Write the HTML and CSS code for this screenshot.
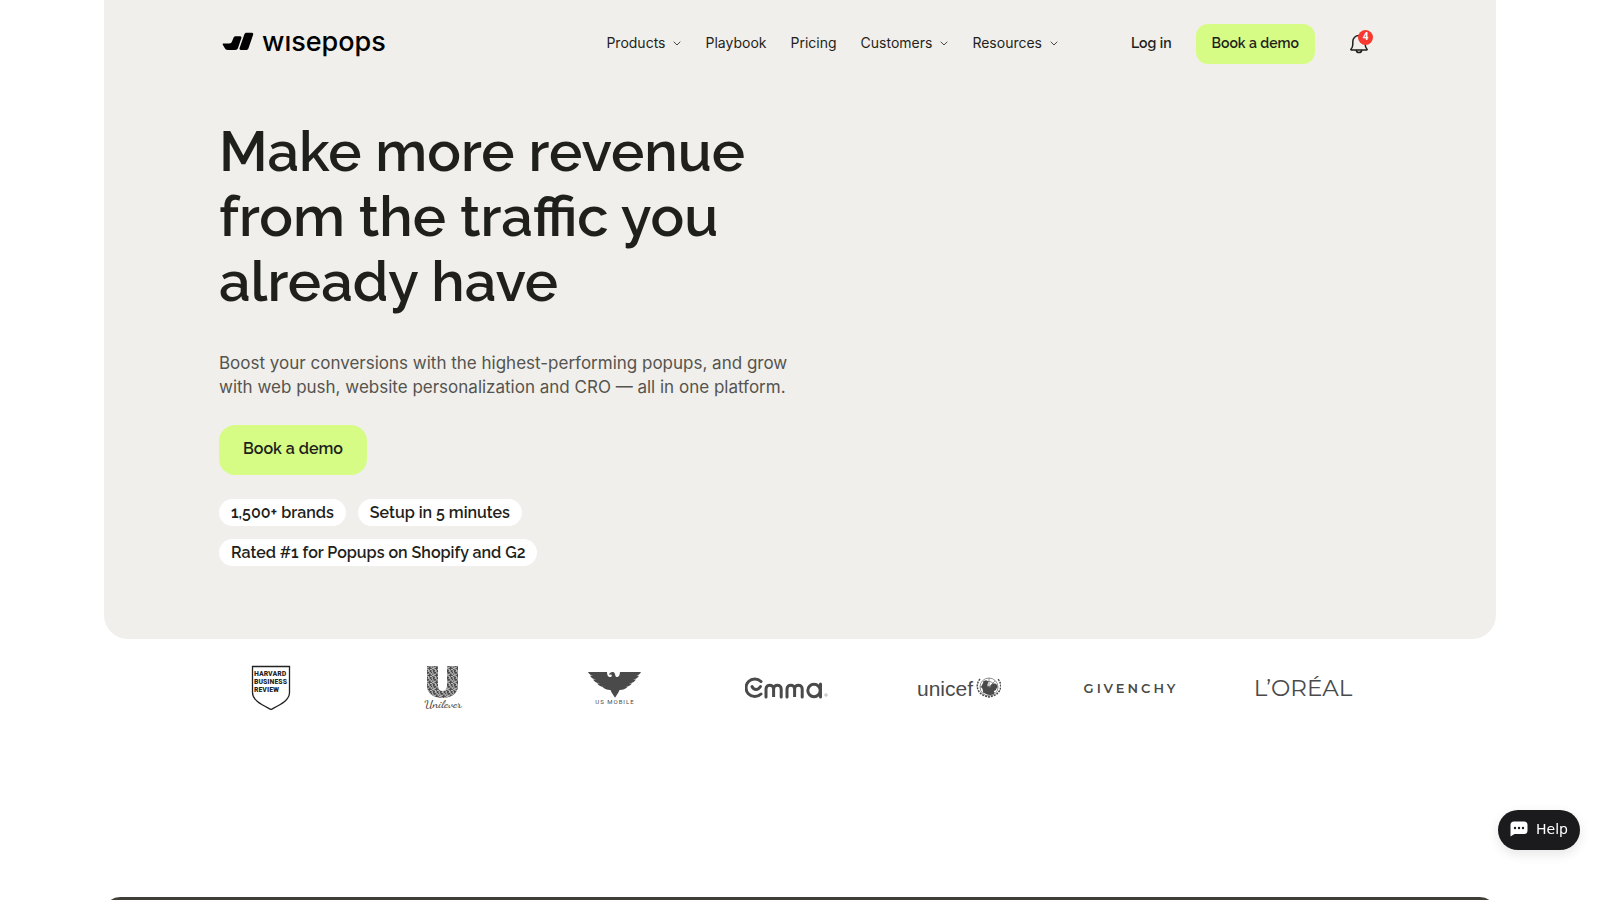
FILE: index.html
```html
<!DOCTYPE html>
<html lang="en">
<head>
  <meta charset="UTF-8">
  <meta name="viewport" content="width=device-width, initial-scale=1">
  <title>Wisepops</title>
  <link rel="stylesheet" href="styles.css">
</head>

<body>

  <div class="hero">
    <header class="header">
      <a class="logo" href="#" aria-label="wisepops">
        <svg class="logo-mark" width="32" height="20" viewBox="0 0 32 20">
          <path d="M1.500 11.500h5.500c2 0 2.500-.8 3.200-2.500l1.200-3c.5-1.200 1.100-1.700 2.400-1.700h4.400c1 0 1.500.7 1.200 1.700l-3.300 9.800c-.5 1.500-1.400 2.200-3 2.200H6.200c-2 0-3-.8-3.800-2.500L.8 12.700c-.3-.7 0-1.200.7-1.200z"/>
          <path d="M22.300 2.500C22.700 1.400 23.400.8 24.600.8h5.200c1.200 0 1.700.8 1.300 1.900l-4.600 13.500c-.4 1.200-1.200 1.800-2.400 1.800h-5.200c-1.200 0-1.700-.8-1.300-1.900z"/>
        </svg>
        <span class="logo-text">wısepops</span>
      </a>

      <nav class="nav">
        <a href="#">Products <svg class="chevron" width="8" height="5" viewBox="0 0 8 5"><path d="M.7.7 4 4 7.300.7"/></svg></a>
        <a href="#">Playbook</a>
        <a href="#">Pricing</a>
        <a href="#">Customers <svg class="chevron" width="8" height="5" viewBox="0 0 8 5"><path d="M.7.7 4 4 7.300.7"/></svg></a>
        <a href="#">Resources <svg class="chevron" width="8" height="5" viewBox="0 0 8 5"><path d="M.7.7 4 4 7.300.7"/></svg></a>
      </nav>

      <div class="actions">
        <a class="login" href="#">Log in</a>
        <button class="btn btn-small">Book a demo</button>
        <button class="bell" aria-label="Notifications">
          <svg width="18" height="20" viewBox="0 0 18 20">
            <path d="M1 15.200c1.400-1.500 1.800-3 1.800-5V7.500C2.800 4 5.500 1.500 9 1.500s6.200 2.500 6.200 6v2.700c0 2 .4 3.500 1.800 5 .3.400.1.800-.4.800H1.400c-.5 0-.7-.4-.4-.8z"/>
            <path d="M6.200 16c.3 1.700 1.300 2.600 2.800 2.600s2.500-.9 2.800-2.600"/>
          </svg>
          <span class="badge">4</span>
        </button>
      </div>
    </header>

    <main class="intro">
      <h1>Make more revenue from the traffic you already have</h1>
      <p>Boost your conversions with the highest-performing popups, and grow with web push, website personalization and CRO — all in one platform.</p>
      <button class="btn btn-large">Book a demo</button>
      <ul class="pills">
        <li>1,500+ brands</li>
        <li>Setup in 5 minutes</li>
        <li>Rated #1 for Popups on Shopify and G2</li>
      </ul>
    </main>
  </div>

  <section class="brands">
    <svg width="40" height="46" viewBox="0 0 40 46">
      <path d="M1.500 1.500h37v26c0 8-9 12-18.500 17C10.500 39.500 1.500 35.500 1.500 27.500z" fill="none" stroke="#222" stroke-width="1.300"/>
      <g class="hbr">
        <text x="3" y="11">HARVARD</text>
        <text x="3" y="19">BUSINESS</text>
        <text x="3" y="27">REVIEW</text>
      </g>
    </svg>

    <svg width="42" height="46" viewBox="0 0 42 46">
      <defs>
        <pattern id="speckle" width="7" height="7" patternUnits="userSpaceOnUse">
          <path d="M0 1c2-1 3 1 2 2M4 0c-1 2 1 3 3 2M1 5c1-2 3 0 2 2M5 4c2 0 2 1 1 3M3 3l2 1M0 6h1" fill="none" stroke="#fff" stroke-width=".8"/>
        </pattern>
      </defs>
      <path d="M5 1h11v20c0 3 1.800 5 4.500 5s4.500-2 4.500-5V1h11v20c0 7-6 12-15.500 12S5 28 5 21z"/>
      <path d="M5 1h11v20c0 3 1.800 5 4.500 5s4.500-2 4.500-5V1h11v20c0 7-6 12-15.500 12S5 28 5 21z" fill="url(#speckle)"/>
      <text class="unilever" x="21" y="43" text-anchor="middle">Unilever</text>
    </svg>

    <svg width="56" height="36" viewBox="0 0 56 36">
      <path d="M1 2h19c0 3 1 5 3 5 2.500 0 2-2 1-2.500l-2 .3c.5-2 2-3 4-2.800 2.500.2 2 4 3 4.800 2 1 4-1 4-4.800h21c-1 2-2 3-5 3.800h3c-1 2-3 3.200-6 3.800h3c-1.500 2.500-3.500 3.500-7 3.900h3c-2 2.300-4 3.300-7 3.500h2.500c-2 2-5 3-8 2.900l-1 2.300-3.500 5.500-3.500-5.500-1-2.300c-3 .1-6-.9-8-2.900H17c-3-.2-5-1.200-7-3.500h3c-3.500-.4-5.500-1.400-7-3.900h3C6 9 4 7.800 3 5.800h3C3 5 2 4 1 2z"/>
      <text class="us-mobile" x="28" y="34" text-anchor="middle">US MOBILE</text>
    </svg>

    <svg width="84" height="24" viewBox="0 0 84 24">
      <g class="emma">
        <path d="M16 5.500A8.800 8.800 0 1 0 16 18"/>
        <path d="M7 10.500c2 4 6 4 8.500 0"/>
        <path d="M21 21v-8c0-5 7.600-5 7.600 0v8-8c0-5 7.600-5 7.600 0v8"/>
        <path d="M42 21v-8c0-5 7.600-5 7.600 0v8-8c0-5 7.600-5 7.600 0v8"/>
        <circle cx="69" cy="14.500" r="6.200"/>
        <path d="M75.500 8v13"/>
      </g>
      <circle cx="81" cy="19" r="1.200" fill="none" stroke="#999" stroke-width=".7"/>
    </svg>

    <svg width="84" height="26" viewBox="0 0 84 26">
      <text class="unicef" x="0" y="21">unicef</text>
      <g class="globe">
        <circle cx="72" cy="12" r="9"/>
        <circle cx="72" cy="12" r="5.500"/>
        <path d="M72 3v18M63 12h18M66 6l12 12M78 6 66 18"/>
        <path d="M63 4c-5 6-3 14 5 17l4 1 4-1c8-3 10-11 5-17" stroke-width="1.500" stroke-dasharray="2 1"/>
      </g>
      <path d="M66 8c1-4 6-3 5 0l-1 3 3 2c0-4 5-6 7-3 1 2-1 4-1 5l-2 1v3c-3 2-8 1-11-2 0-3-1-4-2-5z"/>
    </svg>

    <span class="givenchy">GIVENCHY</span>

    <span class="loreal">L’ORÉAL</span>
  </section>

  <section class="next"></section>

  <button class="help">
    <svg width="18" height="16" viewBox="0 0 18 16">
      <path d="M4 .5h10A3.500 3.500 0 0 1 17.500 4v5.500A3.500 3.500 0 0 1 14 13H4.500L.5 15.500V4A3.500 3.500 0 0 1 4 .5z" fill="#fff"/>
      <g fill="#1b1b1e"><circle cx="5" cy="7" r="1.200"/><circle cx="9" cy="7" r="1.200"/><circle cx="13" cy="7" r="1.200"/></g>
    </svg>
    Help
  </button>

</body>
</html>
```
FILE: styles.css
```css
* {
  box-sizing: border-box;
}

body {
  margin: 0;
  height: 100vh;
  overflow: hidden;
  background: #fff;
  color: #1f1f1b;
  font-family: Inter, sans-serif;
}

a {
  color: inherit;
  text-decoration: none;
}

button {
  border: none;
  color: inherit;
  cursor: pointer;
}

.hero {
  width: 87%;
  margin: 0 auto;
  padding: 24px 115px 73px;
  background: #f0efeb;
  border-radius: 0 0 24px 24px;
}

.header {
  display: flex;
  align-items: center;
  height: 40px;
}

.logo {
  display: flex;
  align-items: center;
  gap: 8px;
  padding: 0 0 4px 3px;
  color: #000;
}

.logo-text {
  font-size: 27px;
  font-weight: 500;
  line-height: 32px;
}

.nav {
  display: flex;
  gap: 24px;
  margin-left: auto;
  padding-bottom: 3px;
  font-size: 14px;
}

.nav a {
  display: flex;
  align-items: center;
  gap: 8px;
}

.chevron {
  margin-top: 2px;
  fill: none;
  stroke: #1f1f1b;
  stroke-width: 0.8;
}

.actions {
  display: flex;
  align-items: center;
  gap: 24px;
  margin-left: 73px;
  padding-right: 13px;
  font-size: 14px;
}

.login, .btn, .pills {
  font-family: Raleway, Lato, sans-serif;
  font-weight: 600;
}

.login {
  padding-bottom: 2px;
}

.btn {
  background: #d6fc86;
}

.btn-small {
  height: 40px;
  padding: 0 16px 2px;
  border-radius: 12px;
  font-size: 14px;
}

.btn-large {
  height: 50px;
  padding: 0 24px 4px;
  border-radius: 16px;
  font-size: 16px;
}

.bell {
  position: relative;
  display: flex;
  margin-left: 11px;
  padding: 0;
  background: none;
}

.bell svg {
  fill: none;
  stroke: #1f1f1b;
  stroke-width: 1.5;
}

.badge {
  position: absolute;
  top: -4px;
  right: -5px;
  width: 15px;
  height: 15px;
  border-radius: 50%;
  background: #f5392f;
  color: #fff;
  font-family: Roboto, sans-serif;
  font-size: 10px;
  font-weight: 700;
  line-height: 14px;
}

.intro {
  max-width: 580px;
  padding-top: 55px;
}

h1 {
  margin: 0 0 37px;
  font-family: Raleway, Lato, sans-serif;
  font-size: 56px;
  font-weight: 600;
  line-height: 65px;
}

.intro p {
  margin: 0 0 26px;
  color: #55544f;
  font-size: 17px;
  line-height: 24px;
}

.pills {
  display: flex;
  flex-wrap: wrap;
  gap: 13px 12px;
  max-width: 400px;
  margin: 24px 0 0;
  padding: 0;
  list-style: none;
  font-size: 16px;
}

.pills li {
  padding: 0 12px;
  border-radius: 14px;
  background: #fff;
  line-height: 27px;
}

.brands {
  display: grid;
  grid-template-columns: repeat(7, 1fr);
  align-items: center;
  justify-items: center;
  width: 1230px;
  max-width: 100%;
  height: 98px;
  margin: 0 auto;
  padding-right: 26px;
  color: #4a4a4a;
  fill: #4a4a4a;
}

.hbr {
  fill: #222;
  font-family: "Liberation Sans Narrow", "Roboto Condensed", "Liberation Sans", sans-serif;
  font-size: 8px;
  font-weight: 700;
}

.unilever {
  font-family: "Dancing Script", cursive;
  font-size: 12px;
  font-weight: 600;
}

.us-mobile {
  font-family: Roboto, sans-serif;
  font-size: 6px;
  letter-spacing: 1px;
}

.emma {
  fill: none;
  stroke: #4a4a4a;
  stroke-width: 3;
  stroke-linecap: round;
}

.unicef {
  font-family: "Liberation Sans", sans-serif;
  font-size: 21px;
}

.globe {
  fill: none;
  stroke: #4a4a4a;
  stroke-width: 0.6;
}

.givenchy {
  font-family: Montserrat, Raleway, sans-serif;
  font-size: 13px;
  font-weight: 600;
  letter-spacing: 3px;
}

.loreal {
  font-family: Montserrat, Raleway, sans-serif;
  font-size: 23px;
}

.next {
  width: 87%;
  height: 400px;
  margin: 160px auto 0;
  border-radius: 16px;
  background: #3f3e38;
}

.help {
  position: fixed;
  right: 20px;
  bottom: 50px;
  display: flex;
  align-items: center;
  gap: 8px;
  height: 40px;
  padding: 0 12px 2px;
  border-radius: 20px;
  background: #1b1b1e;
  box-shadow: 0 4px 12px rgba(0,0,0,0.1);
  color: #fff;
  font-family: "DejaVu Sans", sans-serif;
  font-size: 14px;
}
```
